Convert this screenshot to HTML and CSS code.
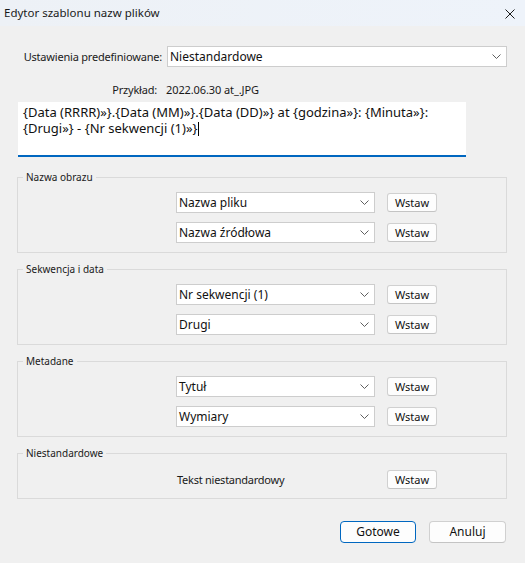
FILE: index.html
```html
<!DOCTYPE html>
<html lang="pl">
<head>
<meta charset="utf-8">
<title>Edytor szablonu nazw plików</title>
<link rel="stylesheet" href="styles.css">
</head>
<body>
<div class="window">
  <div class="titlebar">
    <span class="title">Edytor szablonu nazw plików</span>
    <svg class="close" width="10" height="10" viewBox="0 0 10 10"><path d="M0.5 0.5 L9.5 9.5 M9.5 0.5 L0.5 9.5" stroke="#1a1a1a" stroke-width="1" fill="none"/></svg>
  </div>
  <div class="content">
    <div class="preset-row">
      <span class="row-label">Ustawienia predefiniowane:</span>
      <div class="select select-wide">
        <span class="select-text">Niestandardowe</span>
        <svg class="chev" width="9" height="5" viewBox="0 0 9 5"><path d="M0.5 0.5 L4.5 4.5 L8.5 0.5" stroke="#5f5f5f" stroke-width="1" fill="none"/></svg>
      </div>
    </div>
    <div class="example-row">
      <span class="row-label example-label">Przykład:</span>
      <span class="example-value">2022.06.30 at_.JPG</span>
    </div>
    <div class="template-box">{Data (RRRR)»}.{Data (MM)»}.{Data (DD)»} at {godzina»}: {Minuta»}:<br>{Drugi»} - {Nr sekwencji (1)»}<span class="caret"></span></div>

    <fieldset class="group">
      <legend>Nazwa obrazu</legend>
      <div class="group-row">
        <div class="select select-field"><span class="select-text">Nazwa pliku</span><svg class="chev" width="9" height="5" viewBox="0 0 9 5"><path d="M0.5 0.5 L4.5 4.5 L8.5 0.5" stroke="#5f5f5f" stroke-width="1" fill="none"/></svg></div>
        <button class="btn">Wstaw</button>
      </div>
      <div class="group-row">
        <div class="select select-field"><span class="select-text">Nazwa źródłowa</span><svg class="chev" width="9" height="5" viewBox="0 0 9 5"><path d="M0.5 0.5 L4.5 4.5 L8.5 0.5" stroke="#5f5f5f" stroke-width="1" fill="none"/></svg></div>
        <button class="btn">Wstaw</button>
      </div>
    </fieldset>

    <fieldset class="group">
      <legend>Sekwencja i data</legend>
      <div class="group-row">
        <div class="select select-field"><span class="select-text">Nr sekwencji (1)</span><svg class="chev" width="9" height="5" viewBox="0 0 9 5"><path d="M0.5 0.5 L4.5 4.5 L8.5 0.5" stroke="#5f5f5f" stroke-width="1" fill="none"/></svg></div>
        <button class="btn">Wstaw</button>
      </div>
      <div class="group-row">
        <div class="select select-field"><span class="select-text">Drugi</span><svg class="chev" width="9" height="5" viewBox="0 0 9 5"><path d="M0.5 0.5 L4.5 4.5 L8.5 0.5" stroke="#5f5f5f" stroke-width="1" fill="none"/></svg></div>
        <button class="btn">Wstaw</button>
      </div>
    </fieldset>

    <fieldset class="group">
      <legend>Metadane</legend>
      <div class="group-row">
        <div class="select select-field"><span class="select-text">Tytuł</span><svg class="chev" width="9" height="5" viewBox="0 0 9 5"><path d="M0.5 0.5 L4.5 4.5 L8.5 0.5" stroke="#5f5f5f" stroke-width="1" fill="none"/></svg></div>
        <button class="btn">Wstaw</button>
      </div>
      <div class="group-row">
        <div class="select select-field"><span class="select-text">Wymiary</span><svg class="chev" width="9" height="5" viewBox="0 0 9 5"><path d="M0.5 0.5 L4.5 4.5 L8.5 0.5" stroke="#5f5f5f" stroke-width="1" fill="none"/></svg></div>
        <button class="btn">Wstaw</button>
      </div>
    </fieldset>

    <fieldset class="group group-custom">
      <legend>Niestandardowe</legend>
      <div class="group-row">
        <span class="custom-text">Tekst niestandardowy</span>
        <button class="btn">Wstaw</button>
      </div>
    </fieldset>

    <div class="footer">
      <button class="btn btn-footer btn-default">Gotowe</button>
      <button class="btn btn-footer">Anuluj</button>
    </div>
  </div>
</div>
</body>
</html>
```
FILE: styles.css
```css
* { box-sizing: border-box; }
html, body { margin: 0; padding: 0; }
body {
  width: 525px;
  height: 563px;
  background: #f0f0f0;
  font-family: "Noto Sans", "Open Sans", sans-serif;
  font-size: 12px;
  color: #1a1a1a;
  overflow: hidden;
}
.window { width: 525px; height: 563px; }

.titlebar {
  height: 26px;
  display: flex;
  align-items: center;
  justify-content: space-between;
  padding: 0 10px 0 4px;
  background: linear-gradient(to right, #edf1f6, #eef3fa);
}
.title { font-size: 11.5px; line-height: 16px; color: #1a1a1a; }
.close { display: block; margin-top: 1px; }

.content { padding: 20px 18px 0 17px; }

.preset-row { display: flex; align-items: center; height: 21px; }
.row-label {
  width: 145px;
  margin-right: 5px;
  text-align: right;
  white-space: nowrap;
  font-size: 11px;
  letter-spacing: -0.2px;
  line-height: 16px;
}
.select {
  height: 21px;
  background: #ffffff;
  border: 1px solid #cdcdcd;
  display: flex;
  align-items: center;
  justify-content: space-between;
  padding: 0 5px 0 2px;
}
.select-wide { flex: 1; }
.select-text { line-height: 16px; white-space: nowrap; color: #111; }
.chev { display: block; }

.example-row { display: flex; margin-top: 15px; height: 16px; line-height: 16px; }
.example-label { width: 140px; margin-right: 9px; }
.example-value { white-space: nowrap; font-size: 11px; letter-spacing: -0.1px; }

.template-box {
  margin: 4px 0 0 1px;
  width: 448px;
  height: 55px;
  background: #ffffff;
  border-bottom: 2px solid #0067c0;
  padding: 2px 5px 0 5px;
  font-size: 13px;
  line-height: 16px;
  color: #111;
  white-space: nowrap;
}
.caret {
  display: inline-block;
  width: 1px;
  height: 14px;
  background: #000;
  vertical-align: -3px;
  margin-left: 1px;
}

.group {
  margin: 10px 0 0 0;
  border: 1px solid #dadada;
  padding: 8px 0 9px 0;
  min-width: 0;
}
.content > .group:first-of-type { margin-top: 14px; }
.group legend {
  font-size: 10px;
  line-height: 13px;
  margin-left: 5px;
  padding: 0 3px;
  color: #1a1a1a;
}
.group-row {
  display: flex;
  align-items: center;
  height: 21px;
  margin-left: 158px;
}
.group-row + .group-row { margin-top: 9px; }
.select-field { width: 199px; }

.btn {
  font-family: inherit;
  font-size: 11px;
  line-height: 16px;
  color: #111;
  background: #fdfdfd;
  border: 1px solid #d0d0d0;
  border-bottom-color: #c4c4c4;
  border-radius: 3px;
  height: 19px;
  width: 50px;
  padding: 0;
  margin-left: 12px;
}

.group-custom { padding-top: 10px; padding-bottom: 9px; }
.group-custom .group-row { height: 19px; }
.custom-text {
  width: 199px;
  padding-left: 1px;
  line-height: 16px;
  white-space: nowrap;
  font-size: 11px;
  letter-spacing: -0.25px;
}

.footer {
  display: flex;
  justify-content: flex-end;
  margin-top: 22px;
  padding-right: 1px;
  gap: 13px;
}
.btn-footer {
  margin-left: 0;
  height: 22px;
  width: 77px;
  font-size: 12px;
  border-radius: 4px;
}
.btn-default {
  width: 76px;
  border: 1px solid #0067c0;
}
```
